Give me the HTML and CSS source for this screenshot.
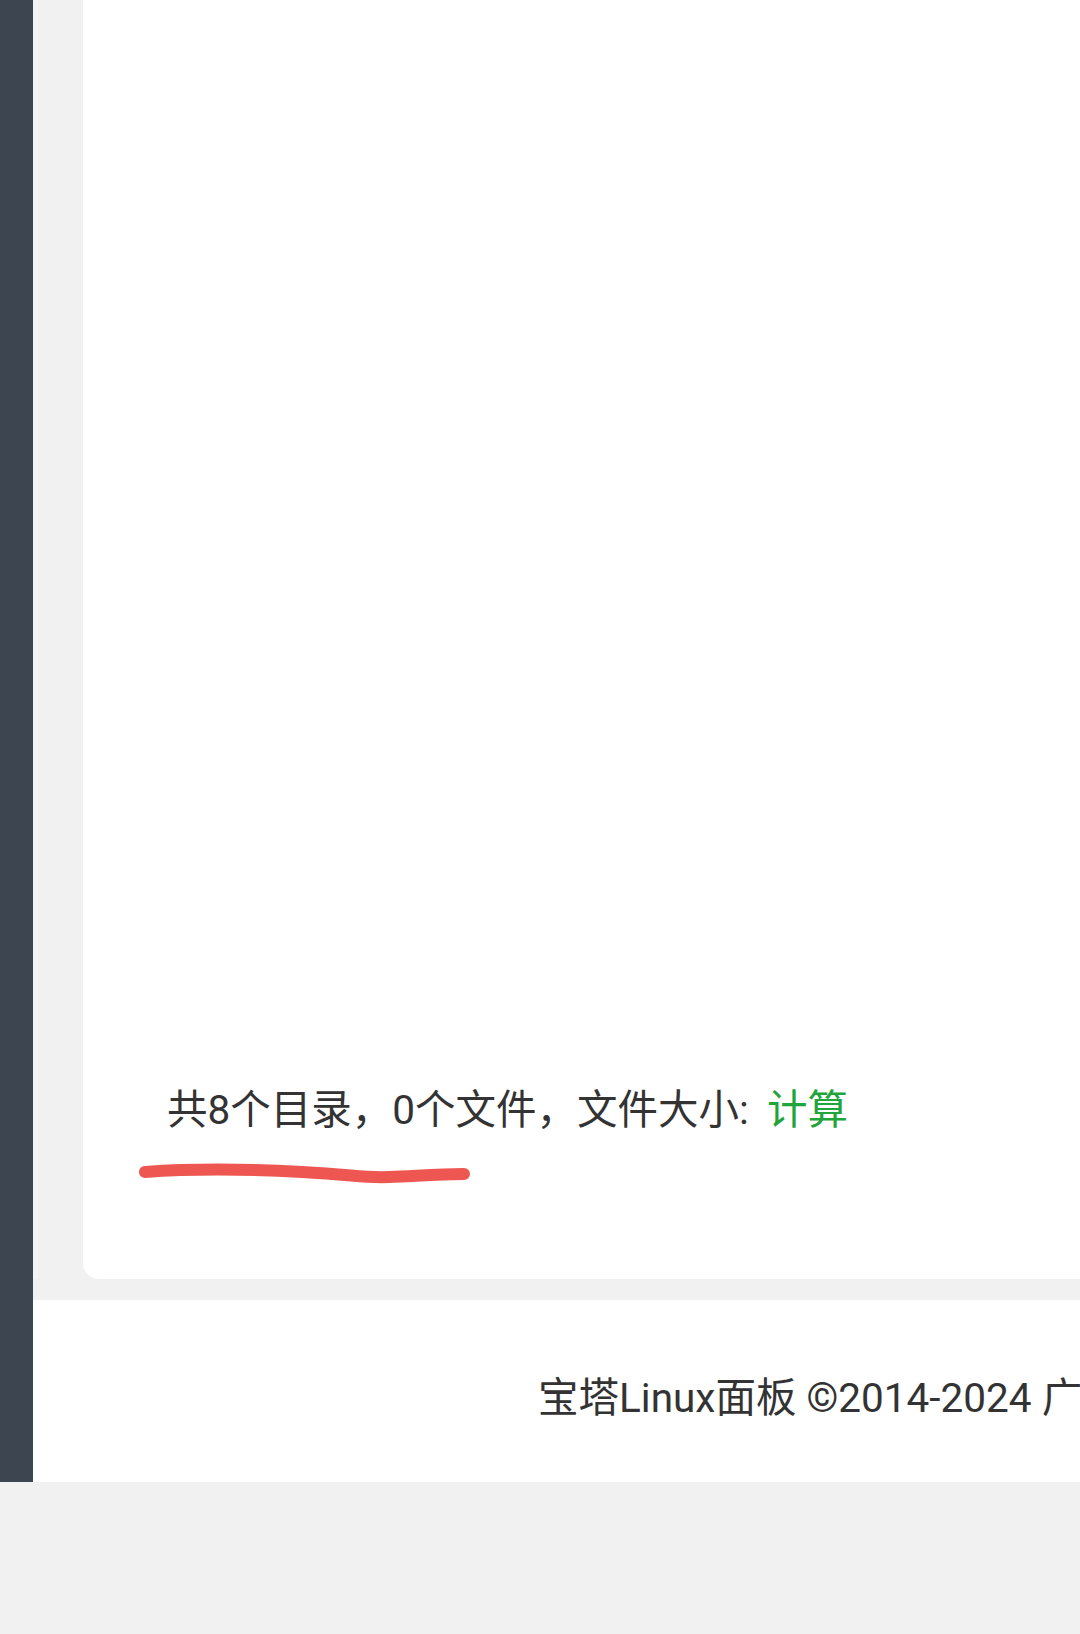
FILE: index.html
```html
<!DOCTYPE html>
<html lang="zh-CN">
  <head>
    <meta charset="UTF-8" />
    <meta name="viewport" content="width=device-width, initial-scale=1.0" />
    <title>文件管理</title>
    <link rel="stylesheet" href="styles.css">
  </head>
  <body>
    <div class="layout">
      <div class="sidebar"></div>
      <div class="main">
        <div class="content">
          <div class="card">
            <div class="summary">
              <span>共8个目录，0个文件，文件大小:</span>
              <a class="calc">计算</a>
            </div>
            <!-- hand drawn mark over the summary -->
            <svg class="mark" width="350" height="30" viewBox="0 0 350 30">
              <path d="M8 12 C 50 9, 110 9, 165 12 S 225 18, 252 17 S 300 14, 327 14" fill="none" stroke="#ee5651" stroke-width="12" stroke-linecap="round" />
            </svg>
          </div>
        </div>
        <div class="footer">
          <p>宝塔Linux面板 ©2014-2024 广东堡塔安全技术有限公司 (bt.cn)</p>
        </div>
      </div>
    </div>
  </body>
</html>
```

FILE: styles.css
```css
*{
    padding: 0;
    margin: 0;
    box-sizing: border-box;
}
body{
    background-color: #f1f1f1;
    font-family: Roboto, "Noto Sans CJK SC", sans-serif;
    color: #333;
    width: 1080px;
    overflow: hidden;
}
.layout{
    display: flex;
    height: 1482px;
}
.sidebar{
    width: 33px;
    flex: none;
    background-color: #3c4550;
}
.main{
    flex: 1;
    display: flex;
    flex-direction: column;
    min-width: 0;
}
.content{
    padding-left: 50px;
    border-left: 5px solid #f4f4f6;
}
.card{
    position: relative;
    height: 1279px;
    background-color: #fff;
    border-bottom-left-radius: 16px;
    display: flex;
    flex-direction: column;
    justify-content: flex-end;
    padding: 0 0 143px 84px;
    margin-left: -5px;
}
.summary{
    font-size: 40.5px;
    line-height: 52px;
    white-space: nowrap;
}
.calc{
    color: #20a53a;
    margin-left: 8px;
}
.mark{
    position: absolute;
    left: 54px;
    top: 1160px;
}
.footer{
    margin-top: 21px;
    flex: 1;
    background-color: #fff;
    display: flex;
    align-items: center;
    padding: 6px 0 0 505px;
    overflow: hidden;
}
.footer p{
    font-size: 40.5px;
    white-space: nowrap;
}
```
